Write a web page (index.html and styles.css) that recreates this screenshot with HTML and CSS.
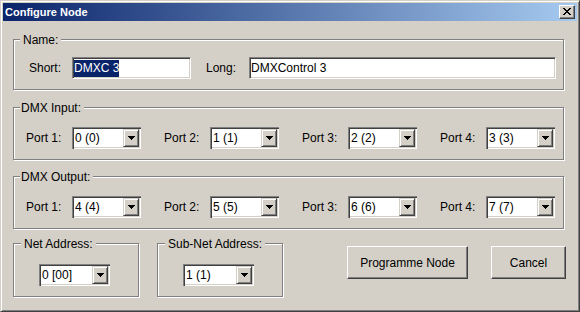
FILE: index.html
```html
<!DOCTYPE html>
<html lang="en">
<head>
    <meta charset="UTF-8">
    <title>Configure Node</title>
    <link rel="stylesheet" href="styles.css">
</head>
<body>
    <div class="window">
        <div class="titlebar">
            <span class="title">Configure Node</span>
            <span class="close-btn">
                <svg width="8" height="7" viewBox="0 0 8 7"><path d="M0 0h2v1H0zM6 0h2v1H6zM1 1h2v1H1zM5 1h2v1H5zM2 2h4v1H2zM3 3h2v1H3zM2 4h4v1H2zM1 5h2v1H1zM5 5h2v1H5zM0 6h2v1H0zM6 6h2v1H6z"/></svg>
            </span>
        </div>

        <div class="content">
            <!-- Name -->
            <div class="group group-name">
                <span class="group-title">Name:</span>
                <div class="name-row">
                    <label class="lbl-short">Short:</label>
                    <div class="textbox tb-short"><span class="selected">DMXC 3</span></div>
                    <label class="lbl-long">Long:</label>
                    <div class="textbox tb-long">DMXControl 3</div>
                </div>
            </div>

            <!-- DMX Input -->
            <div class="group group-ports">
                <span class="group-title">DMX Input:</span>
                <div class="port-row">
                    <div class="port"><label>Port 1:</label><div class="combo"><span class="combo-value">0 (0)</span><span class="combo-btn"><svg width="7" height="4" viewBox="0 0 7 4"><path d="M0 0h7v1H0zM1 1h5v1H1zM2 2h3v1H2zM3 3h1v1H3z"/></svg></span></div></div>
                    <div class="port"><label>Port 2:</label><div class="combo"><span class="combo-value">1 (1)</span><span class="combo-btn"><svg width="7" height="4" viewBox="0 0 7 4"><path d="M0 0h7v1H0zM1 1h5v1H1zM2 2h3v1H2zM3 3h1v1H3z"/></svg></span></div></div>
                    <div class="port"><label>Port 3:</label><div class="combo"><span class="combo-value">2 (2)</span><span class="combo-btn"><svg width="7" height="4" viewBox="0 0 7 4"><path d="M0 0h7v1H0zM1 1h5v1H1zM2 2h3v1H2zM3 3h1v1H3z"/></svg></span></div></div>
                    <div class="port"><label>Port 4:</label><div class="combo"><span class="combo-value">3 (3)</span><span class="combo-btn"><svg width="7" height="4" viewBox="0 0 7 4"><path d="M0 0h7v1H0zM1 1h5v1H1zM2 2h3v1H2zM3 3h1v1H3z"/></svg></span></div></div>
                </div>
            </div>

            <!-- DMX Output -->
            <div class="group group-ports output">
                <span class="group-title">DMX Output:</span>
                <div class="port-row">
                    <div class="port"><label>Port 1:</label><div class="combo"><span class="combo-value">4 (4)</span><span class="combo-btn"><svg width="7" height="4" viewBox="0 0 7 4"><path d="M0 0h7v1H0zM1 1h5v1H1zM2 2h3v1H2zM3 3h1v1H3z"/></svg></span></div></div>
                    <div class="port"><label>Port 2:</label><div class="combo"><span class="combo-value">5 (5)</span><span class="combo-btn"><svg width="7" height="4" viewBox="0 0 7 4"><path d="M0 0h7v1H0zM1 1h5v1H1zM2 2h3v1H2zM3 3h1v1H3z"/></svg></span></div></div>
                    <div class="port"><label>Port 3:</label><div class="combo"><span class="combo-value">6 (6)</span><span class="combo-btn"><svg width="7" height="4" viewBox="0 0 7 4"><path d="M0 0h7v1H0zM1 1h5v1H1zM2 2h3v1H2zM3 3h1v1H3z"/></svg></span></div></div>
                    <div class="port"><label>Port 4:</label><div class="combo"><span class="combo-value">7 (7)</span><span class="combo-btn"><svg width="7" height="4" viewBox="0 0 7 4"><path d="M0 0h7v1H0zM1 1h5v1H1zM2 2h3v1H2zM3 3h1v1H3z"/></svg></span></div></div>
                </div>
            </div>

            <div class="bottom-row">
                <div class="group group-addr">
                    <span class="group-title">Net Address:</span>
                    <div class="combo combo-wide"><span class="combo-value">0 [00]</span><span class="combo-btn"><svg width="7" height="4" viewBox="0 0 7 4"><path d="M0 0h7v1H0zM1 1h5v1H1zM2 2h3v1H2zM3 3h1v1H3z"/></svg></span></div>
                </div>
                <div class="group group-addr">
                    <span class="group-title">Sub-Net Address:</span>
                    <div class="combo combo-wide"><span class="combo-value">1 (1)</span><span class="combo-btn"><svg width="7" height="4" viewBox="0 0 7 4"><path d="M0 0h7v1H0zM1 1h5v1H1zM2 2h3v1H2zM3 3h1v1H3z"/></svg></span></div>
                </div>
                <div class="actions">
                    <button class="btn-programme">Programme Node</button>
                    <button class="btn-cancel">Cancel</button>
                </div>
            </div>
        </div>
    </div>
</body>
</html>
```
FILE: styles.css
```css
body {
    margin: 0;
    font-family: "Liberation Sans", Arial, sans-serif;
    font-size: 12px;
    color: #000;
    background-color: #d4d0c8;
}

.window {
    box-sizing: border-box;
    width: 580px;
    height: 312px;
    padding: 2px;
    background-color: #d4d0c8;
    border: 1px solid;
    border-color: #d4d0c8 #404040 #404040 #d4d0c8;
    box-shadow: inset 1px 1px #fff, inset -1px -1px #808080;
}

/* Title bar */
.titlebar {
    height: 18px;
    display: flex;
    align-items: center;
    justify-content: space-between;
    padding: 0 2px;
    background: linear-gradient(to right, #0a246a, #a6caf0);
}

.title {
    color: #fff;
    font-weight: bold;
    font-size: 11px;
}

.close-btn {
    box-sizing: border-box;
    width: 16px;
    height: 14px;
    display: flex;
    align-items: center;
    justify-content: center;
    padding-bottom: 1px;
    background-color: #d4d0c8;
    border: 1px solid;
    border-color: #fff #404040 #404040 #fff;
    box-shadow: inset -1px -1px #808080;
}

/* Group boxes */
.content {
    padding: 18px 13px 0 10px;
}

.group {
    position: relative;
    box-sizing: border-box;
    border: 1px solid #808080;
    box-shadow: inset 1px 1px #fff, 1px 1px #fff;
}

.group-title {
    position: absolute;
    top: -7px;
    left: 6px;
    padding: 0 3px;
    line-height: 14px;
    background-color: #d4d0c8;
}

.group-name {
    height: 51px;
    padding: 17px 7px 0 15px;
    margin-bottom: 17px;
}

.group-ports {
    height: 53px;
    padding: 19px 0 0 12px;
    margin-bottom: 16px;
}

.group-ports .group-title {
    padding-left: 1px;
}

.group-ports.output {
    margin-bottom: 14px;
}

/* Name row */
.name-row {
    display: flex;
    align-items: center;
}

.lbl-short,
.lbl-long {
    width: 43px;
}

.lbl-long {
    margin-left: 15px;
}

.textbox {
    box-sizing: border-box;
    height: 22px;
    display: flex;
    align-items: center;
    padding: 0 1px;
    background-color: #fff;
    border: 1px solid;
    border-color: #808080 #fff #fff #808080;
    box-shadow: inset 1px 1px #404040, inset -1px -1px #d4d0c8;
}

.tb-short {
    width: 119px;
}

.tb-long {
    flex: 1;
}

.selected {
    background-color: #0a246a;
    color: #fff;
    line-height: 17px;
}

/* Ports */
.port-row {
    display: grid;
    grid-template-columns: repeat(4, 115px);
    column-gap: 23px;
}

.port {
    display: flex;
    align-items: center;
}

.port label {
    width: 46px;
}

/* Combo boxes */
.combo {
    box-sizing: border-box;
    width: 69px;
    height: 22px;
    display: flex;
    padding: 2px;
    background-color: #fff;
    border: 0;
    box-shadow: inset 1px 1px #808080, inset 2px 2px #404040, inset -1px -1px #fff, inset -2px -2px #d4d0c8;
}

.combo-wide {
    width: 71px;
}

.combo-value {
    flex: 1;
    display: flex;
    align-items: center;
    padding-left: 1px;
}

.combo-btn {
    box-sizing: border-box;
    width: 16px;
    display: flex;
    align-items: center;
    justify-content: center;
    background-color: #d4d0c8;
    border: 1px solid;
    border-color: #d4d0c8 #404040 #404040 #d4d0c8;
    box-shadow: inset 1px 1px #fff, inset -1px -1px #808080;
}

/* Bottom row */
.bottom-row {
    display: flex;
    align-items: flex-start;
}

.group-addr {
    width: 126px;
    height: 54px;
    padding: 20px 0 0 25px;
    margin-right: 18px;
}

.group-addr .group-title {
    left: 7px;
}

.actions {
    display: flex;
    gap: 23px;
    margin: 3px -2px 0 auto;
}

button {
    box-sizing: border-box;
    height: 33px;
    font-family: inherit;
    font-size: 12px;
    color: #000;
    background-color: #d4d0c8;
    border: 1px solid;
    border-color: #fff #404040 #404040 #fff;
    box-shadow: inset -1px -1px #808080;
    padding: 0;
}

.btn-programme {
    width: 121px;
}

.btn-cancel {
    width: 75px;
}
```
